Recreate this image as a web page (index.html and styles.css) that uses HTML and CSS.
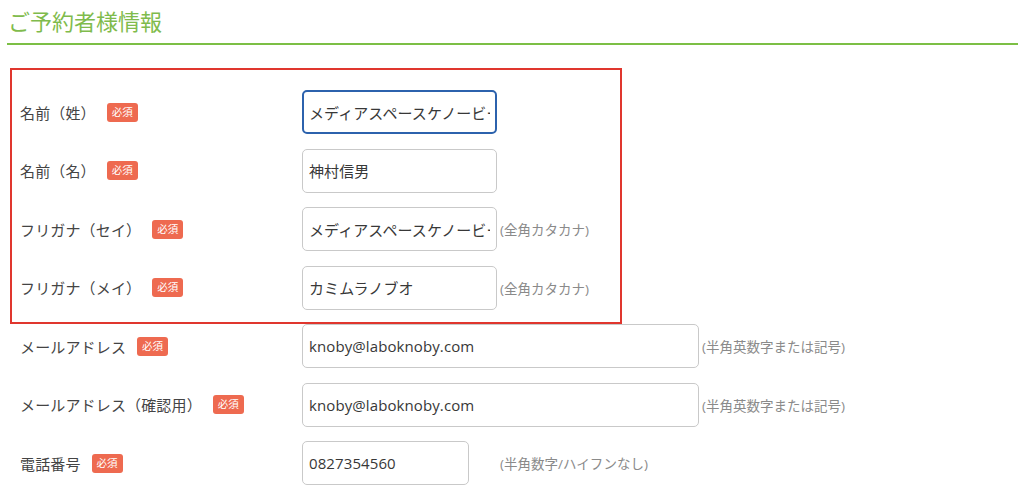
FILE: index.html
```html
<!DOCTYPE html>
<html lang="ja">
<head>
<meta charset="utf-8">
<title>ご予約者様情報</title>
<link rel="stylesheet" href="styles.css">
</head>
<body>
<div class="page">
  <h2 class="section-title">ご予約者様情報</h2>
  <div class="form">
    <div class="highlight"></div>
    <div class="row">
      <div class="label">名前（姓）<span class="badge">必須</span></div>
      <input class="field field-short is-focused" type="text" value="メディアスペースケノービー">
    </div>
    <div class="row">
      <div class="label">名前（名）<span class="badge">必須</span></div>
      <input class="field field-short" type="text" value="神村信男">
    </div>
    <div class="row">
      <div class="label">フリガナ（セイ）<span class="badge">必須</span></div>
      <input class="field field-short" type="text" value="メディアスペースケノービー">
      <span class="hint">(全角カタカナ)</span>
    </div>
    <div class="row">
      <div class="label">フリガナ（メイ）<span class="badge">必須</span></div>
      <input class="field field-short" type="text" value="カミムラノブオ">
      <span class="hint">(全角カタカナ)</span>
    </div>
    <div class="row">
      <div class="label">メールアドレス<span class="badge">必須</span></div>
      <input class="field field-long" type="text" value="knoby@laboknoby.com">
      <span class="hint">(半角英数字または記号)</span>
    </div>
    <div class="row">
      <div class="label">メールアドレス（確認用）<span class="badge">必須</span></div>
      <input class="field field-long" type="text" value="knoby@laboknoby.com">
      <span class="hint">(半角英数字または記号)</span>
    </div>
    <div class="row">
      <div class="label">電話番号<span class="badge">必須</span></div>
      <input class="field field-tel" type="text" value="0827354560">
      <span class="hint hint-wide">(半角数字/ハイフンなし)</span>
    </div>
  </div>
</div>
</body>
</html>
```
FILE: styles.css
```css
html, body {
  margin: 0;
  padding: 0;
  background: #ffffff;
}

body {
  font-family: "Open Sans", "Noto Sans CJK JP", "Noto Sans", sans-serif;
  color: #333333;
}

.page {
  padding: 0 6px 0 7px;
}

.section-title {
  margin: 0;
  padding: 6px 0 7px 1px;
  line-height: 30px;
  font-size: 22px;
  font-weight: 400;
  color: #7fbb4c;
  border-bottom: 2px solid #7cbf45;
}

.form {
  position: relative;
  margin-top: 45px;
  padding-left: 13px;
  display: flex;
  flex-direction: column;
  gap: 14.5px;
}

.highlight {
  position: absolute;
  left: 3px;
  top: -22px;
  width: 612px;
  height: 256px;
  box-sizing: border-box;
  border: 2px solid #e0362e;
  pointer-events: none;
}

.row {
  display: flex;
  align-items: center;
  height: 44px;
}

.label {
  width: 282px;
  flex: none;
  display: flex;
  align-items: center;
  font-size: 15px;
  color: #444444;
  letter-spacing: 0.15px;
}

.badge {
  margin-left: 11px;
  display: inline-flex;
  align-items: center;
  justify-content: center;
  width: 31px;
  height: 19px;
  border-radius: 3px;
  background: #ee6a50;
  color: #ffffff;
  font-size: 10.5px;
  line-height: 1;
  letter-spacing: 0;
}

.field {
  box-sizing: border-box;
  height: 44px;
  margin: 0;
  padding: 0 6px;
  border: 1px solid #c9c9c9;
  border-radius: 5px;
  background: #ffffff;
  font-family: "Open Sans", "Noto Sans CJK JP", "Noto Sans", sans-serif;
  font-size: 15px;
  color: #383838;
  letter-spacing: 0.1px;
  outline: none;
  flex: none;
}

.field-short {
  width: 195px;
}

.field-long {
  width: 397px;
}

.field-tel {
  width: 167px;
}

.is-focused {
  border: 2px solid #2c62ad;
  padding: 0 5px;
}

.hint {
  margin-left: 3px;
  font-size: 13.5px;
  color: #8a8a8a;
}

.hint-wide {
  margin-left: 31px;
}
```
